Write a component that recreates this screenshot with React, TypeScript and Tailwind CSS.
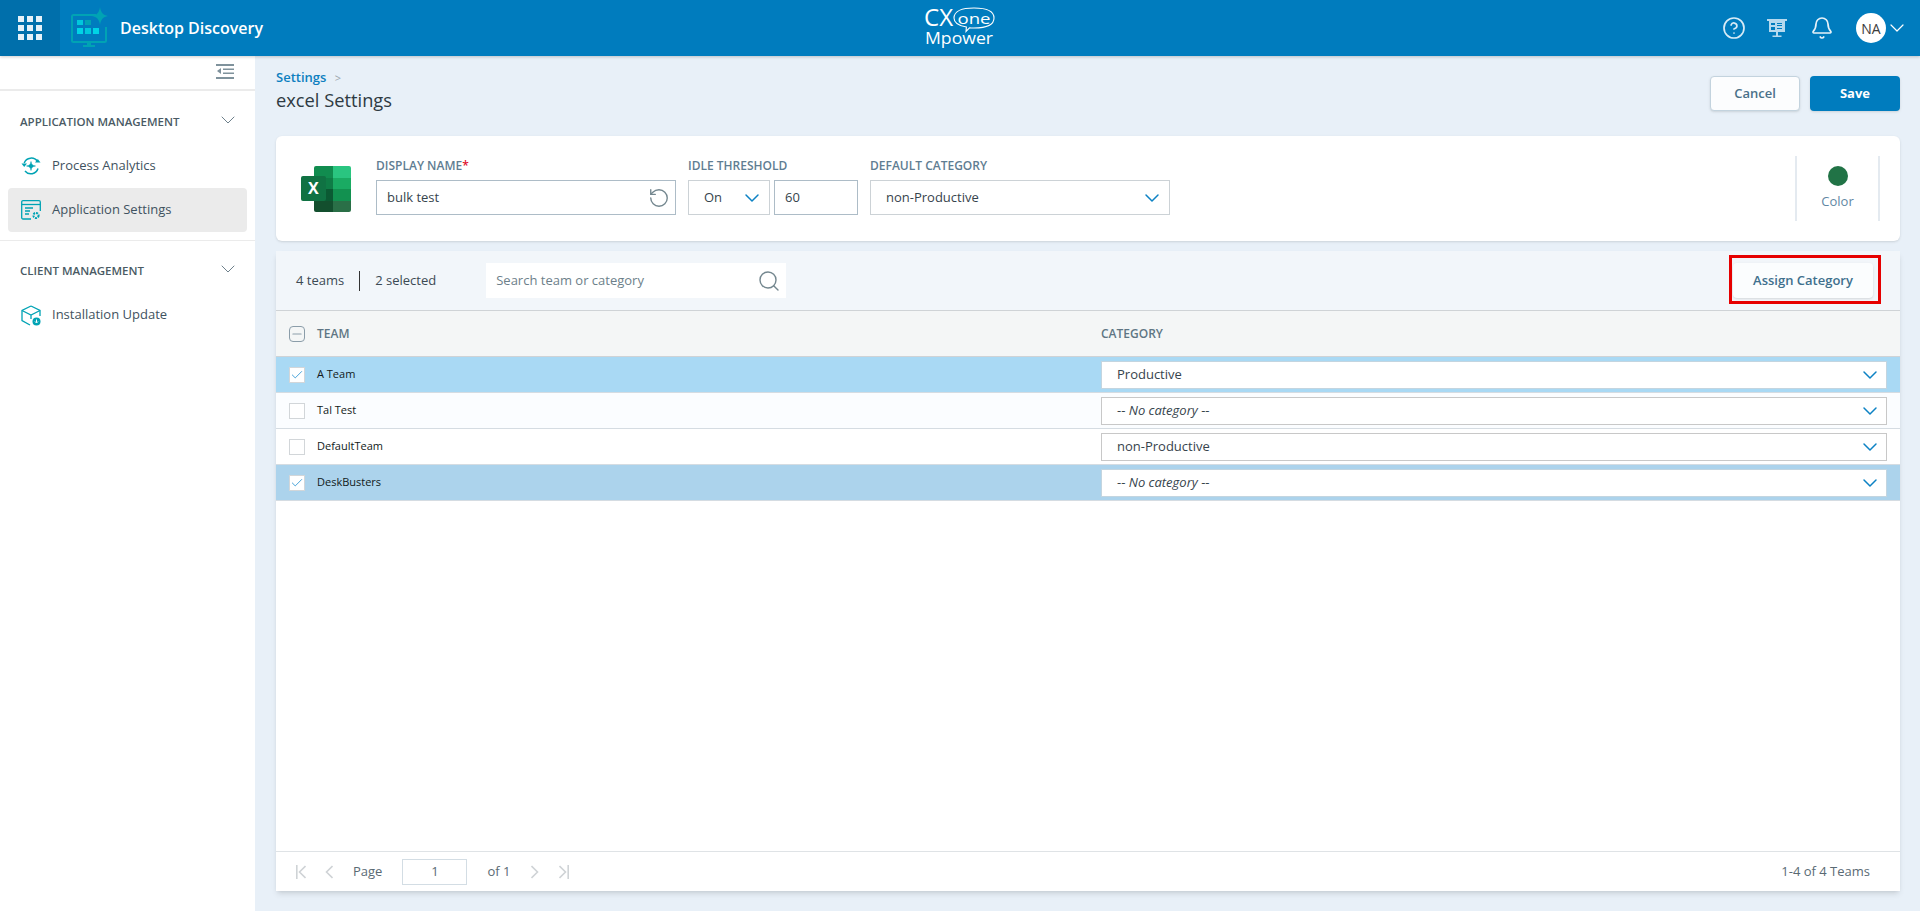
import { ChevronDown, Check, Minus, Search, RotateCcw, HelpCircle, Bell } from "lucide-react";

function Waffle() {
  return (
    <div className="grid grid-cols-3 gap-[3px]">
      {[0, 1, 2, 3, 4, 5, 6, 7, 8].map((i) => (
        <div key={i} className="w-[6px] h-[6px] bg-[#e6f1f8]" />
      ))}
    </div>
  );
}

function AppLogo() {
  return (
    <svg width="42" height="42" viewBox="0 0 42 42" fill="none">
      <path d="M26 8H3.500A1.500 1.500 0 0 0 2 9.500v24A1.500 1.500 0 0 0 3.500 35h31a1.500 1.500 0 0 0 1.500-1.500V20" stroke="#00a3b4" strokeWidth="2" />
      <path d="M17 35v3h-4v2h12v-2h-4v-3z" fill="#00a3b4" />
      <path d="M30 0c.8 5.500 3 8 8 9-5 1-7.200 3.500-8 9-.8-5.500-3-8-8-9 5-1 7.200-3.500 8-9z" fill="#00a3b4" />
      <rect x="7" y="13" width="6" height="5" fill="#00c8dc" />
      <rect x="15" y="13" width="6" height="5" fill="#00a3b4" />
      <rect x="7" y="21" width="6" height="6" fill="#00d4e6" />
      <rect x="15" y="21" width="6" height="6" fill="#00c8dc" />
      <rect x="23" y="21" width="6" height="6" fill="#00d4e6" />
    </svg>
  );
}

function CxLogo() {
  return (
    <svg width="72" height="44" viewBox="0 0 72 44" fill="none" className="overflow-visible">
      <text x="0" y="20" fill="#fff" fontFamily="'Open Sans', sans-serif" fontSize="24" textLength="29" lengthAdjust="spacingAndGlyphs">CX</text>
      <path d="M50 2c12 0 20 3 20 10s-8 10-20 10c-1.500 0-3 0-4.500-.2L42 25.500l.4-4.500C35 19.800 30 16.500 30 12c0-7 8-10 20-10z" stroke="#fff" strokeWidth="1.100" />
      <text x="33.500" y="17.500" fill="#fff" fontFamily="'Open Sans', sans-serif" fontSize="15" textLength="33" lengthAdjust="spacingAndGlyphs">one</text>
      <text x="1" y="37.500" fill="#fff" fontFamily="'Open Sans', sans-serif" fontSize="16.500" textLength="68" lengthAdjust="spacingAndGlyphs">Mpower</text>
    </svg>
  );
}

function Presentation() {
  return (
    <svg width="20" height="20" viewBox="0 0 20 20" fill="#b5d9ee">
      <rect x="0" y="1" width="20" height="2" />
      <path d="M2 3h16v11H2zm2 2v2h4V5zm6 0v1h5V5zm0 2v1h5V7zm-6 2v3h4V9zm6 1v1h5v-1z" fillRule="evenodd" />
      <rect x="9" y="14" width="2" height="4" />
      <rect x="5.500" y="17.500" width="9" height="1.500" />
    </svg>
  );
}

function Collapse() {
  return (
    <svg width="18" height="15" viewBox="0 0 18 15" fill="#7f929c">
      <rect x="0" y="0" width="18" height="2" />
      <rect x="7" y="4.500" width="11" height="1.500" />
      <rect x="7" y="8.500" width="11" height="1.500" />
      <rect x="0" y="13" width="18" height="2" />
      <path d="M5 4v6L1 7z" />
    </svg>
  );
}

function ProcessIcon() {
  return (
    <svg width="20" height="20" viewBox="0 0 20 20" fill="none" stroke="#00a3b4" strokeWidth="1.500">
      <path d="M3.200 7A7.500 7.500 0 0 1 16.500 5.500" />
      <path d="M17 12.500A7.500 7.500 0 0 1 4 15" />
      <path d="M0.500 7.500h5.500L3.200 11z" fill="#00a3b4" stroke="none" />
      <path d="M14 6.500h5.500L16.800 3z" fill="#00a3b4" stroke="none" />
      <path d="M10 5.500c.5 3 1.500 4 4.500 4.500-3 .5-4 1.500-4.500 4.500-.5-3-1.500-4-4.500-4.500 3-.5 4-1.500 4.500-4.500z" fill="#00a3b4" strokeWidth="0.500" />
    </svg>
  );
}

function SettingsIcon() {
  return (
    <svg width="20" height="20" viewBox="0 0 20 20" fill="none" stroke="#00a3b4" strokeWidth="1.300">
      <path d="M10 19H2a1.300 1.300 0 0 1-1.300-1.300V2A1.300 1.300 0 0 1 2 .7h16A1.300 1.300 0 0 1 19.300 2v9" />
      <path d="M1 4.500h18.500" />
      <path d="M4 8h8M4 11h5M4 14h4" />
      <circle cx="15" cy="15.500" r="2.600" strokeWidth="2" strokeDasharray="2 1" />
    </svg>
  );
}

function InstallIcon() {
  return (
    <svg width="20" height="21" viewBox="0 0 20 21" fill="none" stroke="#00a3b4" strokeWidth="1.300">
      <path d="M10 1 1 5.500v10L9 20" />
      <path d="M10 1l9 4.500V11" />
      <path d="M1 5.500 10 10l9-4.500M10 10v4" />
      <circle cx="15.500" cy="16.500" r="4" fill="#00a3b4" stroke="none" />
      <path d="M15.500 14.500v3M14 16.500l1.500 1.500 1.500-1.500" stroke="#fff" strokeWidth="1" />
    </svg>
  );
}

function ExcelIcon() {
  return (
    <svg width="50" height="46" viewBox="0 0 50 46" fill="none">
      <path d="M13 2a2 2 0 0 1 2-2h17v12H13z" fill="#118c4f" />
      <path d="M32 0h16a2 2 0 0 1 2 2v10H32z" fill="#2ac580" />
      <rect x="13" y="12" width="19" height="11" fill="#0f7c46" />
      <rect x="32" y="12" width="18" height="11" fill="#1aab63" />
      <rect x="13" y="23" width="19" height="12" fill="#0b5a33" />
      <rect x="32" y="23" width="18" height="12" fill="#129150" />
      <path d="M13 35h19v11H15a2 2 0 0 1-2-2z" fill="#134f2e" />
      <path d="M32 35h18v9a2 2 0 0 1-2 2H32z" fill="#2a6f47" />
      <rect x="0" y="10" width="25" height="25" rx="2" fill="#107243" />
      <text x="7" y="28" fill="#fff" fontFamily="'Open Sans', sans-serif" fontSize="16" fontWeight="700">X</text>
    </svg>
  );
}

// first / prev / next / last arrows of the pager
function PagerIcon({ bar, flip }: { bar?: boolean; flip?: boolean }) {
  return (
    <svg width={bar ? 10 : 8} height="14" viewBox={bar ? "0 0 10 14" : "0 0 8 14"} fill="none" stroke="#cfd3d6" strokeWidth="1.600" className={flip ? "-scale-x-100" : ""}>
      {bar && <path d="M.8 0v14" />}
      <path d={bar ? "M9.500 1 3.500 7l6 6" : "M7.500 1 1.500 7l6 6"} />
    </svg>
  );
}

function Checkbox({ checked }: { checked: boolean }) {
  return (
    <div className="w-4 h-4 border border-[#d2d6d9] bg-white flex items-center justify-center">
      {checked && <Check size={14} strokeWidth={1.500} className="text-[#2f96d4]" />}
    </div>
  );
}

function NavItem({ icon, label, active }: { icon: React.ReactNode; label: string; active?: boolean }) {
  return (
    <div className={`mx-2 h-11 rounded flex items-center pl-[13px] gap-[11px] text-[13px] text-[#3f5260] ${active ? "bg-[#ebebeb]" : ""}`}>
      <span className="w-5 flex justify-center">{icon}</span>
      <span>{label}</span>
    </div>
  );
}

function Select({ value, width }: { value: string; width: string }) {
  return (
    <div className={`${width} h-[35px] border border-[#ccd2d6] bg-white flex items-center justify-between pl-[15px] pr-[5px] text-[13px] text-[#36444d]`}>
      <span>{value}</span>
      <ChevronDown size={24} strokeWidth={1.500} className="text-[#0d82c4]" />
    </div>
  );
}

const teams = [
  { name: "A Team", category: "Productive", bg: "bg-[#a9d9f4]", selected: true },
  { name: "Tal Test", category: "-- No category --", bg: "bg-[#fbfdff]", selected: false },
  { name: "DefaultTeam", category: "non-Productive", bg: "bg-white", selected: false },
  { name: "DeskBusters", category: "-- No category --", bg: "bg-[#acd3ec]", selected: true },
];

export default function App() {
  return (
    <div className="h-screen w-full overflow-hidden flex flex-col bg-[#e8f0f8] font-['Open_Sans',sans-serif]">
      <header className="h-14 shrink-0 bg-[#007cbe] flex items-center text-white shadow-[0_1px_3px_rgba(0,0,0,0.2)] relative z-10">
        <div className="flex-1 flex items-center">
          <div className="w-[60px] h-14 bg-[#006fab] flex items-center justify-center">
            <Waffle />
          </div>
          <div className="ml-[10px] w-[40px]">
            <AppLogo />
          </div>
          <span className="ml-[10px] text-[16px] font-semibold">Desktop Discovery</span>
        </div>
        <CxLogo />
        <div className="flex-1 flex items-center justify-end">
          <HelpCircle size={24} strokeWidth={1.700} className="text-[#d8ebf6]" />
          <span className="ml-[21px]"><Presentation /></span>
          <Bell size={24} strokeWidth={1.700} className="ml-[23px] text-[#e6f1f8]" />
          <div className="ml-[22px] w-[30px] h-[30px] rounded-full bg-white text-[#3c3c3c] text-[14px] flex items-center justify-center">NA</div>
          <ChevronDown size={24} strokeWidth={1.200} className="-ml-[1px] mr-[11px] text-white" />
        </div>
      </header>

      <div className="flex-1 flex min-h-0">
        <aside className="w-[255px] shrink-0 bg-white">
          <div className="h-[35px] border-b-2 border-[#ebebeb] flex justify-end items-start pt-[8px] pr-[21px]">
            <Collapse />
          </div>
          <div className="h-[53px] pt-[9px] pl-5 pr-[15px] flex items-center justify-between text-[11.500px] font-semibold text-[#4a5a64]">
            <span>APPLICATION MANAGEMENT</span>
            <ChevronDown size={24} strokeWidth={1} className="text-[#6e808b] -mt-1" />
          </div>
          <NavItem icon={<ProcessIcon />} label="Process Analytics" />
          <NavItem icon={<SettingsIcon />} label="Application Settings" active />
          <div className="mt-2 border-t border-[#ebebeb]" />
          <div className="h-[52px] pt-[8px] pl-5 pr-[15px] flex items-center justify-between text-[11.500px] font-semibold text-[#4a5a64]">
            <span>CLIENT MANAGEMENT</span>
            <ChevronDown size={24} strokeWidth={1} className="text-[#6e808b] -mt-1" />
          </div>
          <NavItem icon={<InstallIcon />} label="Installation Update" />
        </aside>

        <main className="flex-1 min-w-0 pl-[21px] pr-5 pb-5 flex flex-col">
          <div className="h-[80px] shrink-0 flex justify-between pt-[12px]">
            <div>
              <div className="text-[13px] font-semibold text-[#0d7fc0] leading-[18px]">
                Settings <span className="ml-[5px] text-[11px] font-normal text-[#9aa5ab]">&gt;</span>
              </div>
              <div className="text-[18.300px] font-medium text-[#2e3a42] leading-[25px]">excel Settings</div>
            </div>
            <div className="flex gap-[10px] pt-[8px]">
              <button className="w-[90px] h-[35px] rounded-sm bg-[#fcfdfe] border border-[#c3d3de] text-[13px] font-semibold text-[#4a7189] shadow-sm">Cancel</button>
              <button className="w-[90px] h-[35px] rounded-sm bg-[#007cbe] text-[13px] font-bold text-white shadow-sm">Save</button>
            </div>
          </div>

          <section className="h-[105px] shrink-0 bg-white rounded-md shadow-sm flex items-center pl-[25px] pr-[20px]">
            <ExcelIcon />
            <div className="ml-[25px] -mt-[4px]">
              <div className="text-[12px] font-semibold text-[#5f7d92] leading-[16px] mb-[6px]">DISPLAY NAME<span className="text-[#e0102f]">*</span></div>
              <div className="w-[300px] h-[35px] border border-[#adbcc7] flex items-center justify-between pl-[10px] pr-[5px] text-[13px] text-[#36444d]">
                <span>bulk test</span>
                <RotateCcw size={22} strokeWidth={1.500} className="text-[#74878f]" />
              </div>
            </div>
            <div className="ml-3 -mt-[4px]">
              <div className="text-[12px] font-semibold text-[#5f7d92] leading-[16px] mb-[6px]">IDLE THRESHOLD</div>
              <div className="flex gap-1">
                <Select value="On" width="w-[82px]" />
                <div className="w-[84px] h-[35px] border border-[#adbcc7] flex items-center pl-[10px] text-[13px] text-[#36444d]">60</div>
              </div>
            </div>
            <div className="ml-3 -mt-[4px]">
              <div className="text-[12px] font-semibold text-[#5f7d92] leading-[16px] mb-[6px]">DEFAULT CATEGORY</div>
              <Select value="non-Productive" width="w-[300px]" />
            </div>
            <div className="ml-auto w-[85px] h-[65px] border-x-2 border-[#e4eaf0] flex flex-col items-center">
              <div className="w-5 h-5 rounded-full bg-[#217346] mt-[10px]" />
              <div className="text-[13px] text-[#5f87a3] mt-[6px] leading-[18px]">Color</div>
            </div>
          </section>

          <section className="mt-[10px] flex-1 min-h-0 bg-white shadow-md flex flex-col">
            <div className="h-[59px] shrink-0 bg-[#f2f6fa] flex items-center pl-5 pr-[27px] text-[13px] text-[#3c4a54] relative">
              <span>4 teams</span>
              <span className="ml-[15px] h-5 border-l border-[#333]" />
              <span className="ml-[15px]">2 selected</span>
              <div className="ml-[50px] w-[300px] h-[35px] bg-white flex items-center justify-between pl-[10px] pr-[5px] text-[#6d7f8a]">
                <span>Search team or category</span>
                <Search size={24} strokeWidth={1.400} className="text-[#74878f]" />
              </div>
              <div className="ml-auto relative">
                <button className="w-[140px] h-[35px] rounded-sm bg-[#fbfdfe] text-[13px] font-semibold text-[#40708d] shadow-sm">Assign Category</button>
                <div className="absolute -left-1 -right-2 -top-2 -bottom-[6px] border-[3px] border-[#e60000]" />
              </div>
            </div>
            <div className="h-[47px] shrink-0 bg-[#f4f6f6] border-y border-[#cfd3d6] flex items-center pl-[13px] text-[12px] font-semibold text-[#5f7684]">
              <div className="w-4 h-4 rounded-sm border border-[#8b9da9] flex items-center justify-center">
                <Minus size={16} strokeWidth={2} className="text-[#8b9da9]" />
              </div>
              <span className="ml-3 w-[784px]">TEAM</span>
              <span>CATEGORY</span>
            </div>
            {teams.map((t) => (
              <div key={t.name} className={`h-9 shrink-0 border-b border-[#d5dce2] flex items-center pl-[13px] pr-[13px] text-[11px] text-[#111a20] ${t.bg}`}>
                <Checkbox checked={t.selected} />
                <span className="ml-3 w-[784px]">{t.name}</span>
                <div className={`flex-1 h-7 border ${t.selected ? "border-[#c3d5e0]" : "border-[#c8c8c8]"} bg-white flex items-center justify-between pl-[15px] pr-1 text-[13px] text-[#36444d]`}>
                  <span>{t.category.startsWith("--") ? <>-- <i>No category</i> --</> : t.category}</span>
                  <ChevronDown size={24} strokeWidth={1.500} className="text-[#0d82c4]" />
                </div>
              </div>
            ))}
            <div className="flex-1" />
            <div className="h-10 shrink-0 border-t border-[#dfe3e6] flex items-center pl-5 pr-[30px] text-[13px] text-[#5a6a74]">
              <PagerIcon bar />
              <span className="ml-[19px]"><PagerIcon /></span>
              <span className="ml-5">Page</span>
              <div className="ml-5 w-[65px] h-[26px] border border-[#d3dde4] flex items-center justify-center">1</div>
              <span className="ml-[20px]">of 1</span>
              <span className="ml-[21px]"><PagerIcon flip /></span>
              <span className="ml-5"><PagerIcon bar flip /></span>
              <span className="ml-auto">1-4 of 4 Teams</span>
            </div>
          </section>
        </main>
      </div>
    </div>
  );
}
